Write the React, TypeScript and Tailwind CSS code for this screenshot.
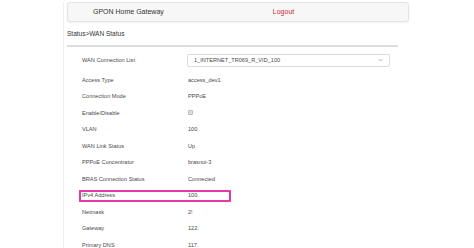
import React from 'react';

interface Row {
  label: string;
  value: string;
}

const rows: Row[] = [
  { label: 'Access Type', value: 'access_dev1' },
  { label: 'Connection Mode', value: 'PPPoE' },
  { label: 'Enable/Disable', value: '' },
  { label: 'VLAN', value: '100' },
  { label: 'WAN Link Status', value: 'Up' },
  { label: 'PPPoE Concentrator', value: 'brasnoi-3' },
  { label: 'BRAS Connection Status', value: 'Connected' },
  { label: 'IPv4 Address', value: '100.' },
  { label: 'Netmask', value: '2!' },
  { label: 'Gateway', value: '122.' },
  { label: 'Primary DNS', value: '117.' },
];

const App: React.FC = () => {
  return (
    <div className="w-[474px] h-[248px] overflow-hidden bg-white font-['Liberation_Sans',Arial,sans-serif]">
      <div className="ml-[63px] w-[346px] h-full border-l border-[#efefef] pl-[3px]">
        {/* top bar */}
        <div className="mt-[2px] h-[20px] w-[342px] flex items-center bg-[#f7f7f7] border border-[#e2e2e2] rounded-[3px] shadow-[0_1px_2px_rgba(0,0,0,0.06)]">
          <span className="ml-[25px] text-[7px] text-[#333]">GPON Home Gateway</span>
          <span className="ml-[109px] text-[7px] text-[#cc2a32]">Logout</span>
        </div>

        <div className="mt-[8px] h-[8px] flex items-center text-[6.5px] text-[#333]">Status&gt;WAN Status</div>
        <div className="mt-[7px] h-[2px] w-[331px] bg-[#dddddd]" />

        <div className="mt-[2px] pl-[15px] text-[5.6px] text-[#4a4a4a]">
          {/* connection list */}
          <div className="h-[22.5px] flex items-center">
            <span className="w-[105px]">WAN Connection List</span>
            <div className="h-[13px] w-[203px] flex items-center justify-between border border-[#dcdcdc] rounded-[2px] px-[6px]">
              <span>1_INTERNET_TR069_R_VID_100</span>
              <svg width="5" height="4" viewBox="0 0 5 4" fill="none" stroke="#999" strokeWidth="0.7">
                <path d="M0.5 1 L2.5 3 L4.5 1" />
              </svg>
            </div>
          </div>

          {rows.map((row) => (
            <div key={row.label} className="relative h-[16.5px] flex items-center">
              <span className="w-[106px]">{row.label}</span>
              {row.label === 'Enable/Disable' ? (
                <span className="w-[5px] h-[5px] border border-[#bdbdbd] bg-[#dedede] rounded-[1px]" />
              ) : (
                <span>{row.value}</span>
              )}
              {row.label === 'IPv4 Address' && (
                <div className="absolute left-[-3px] top-[2.5px] w-[152px] h-[12.5px] border-2 border-[#e23aa8]" />
              )}
            </div>
          ))}
        </div>
      </div>
    </div>
  );
};

export default App;
